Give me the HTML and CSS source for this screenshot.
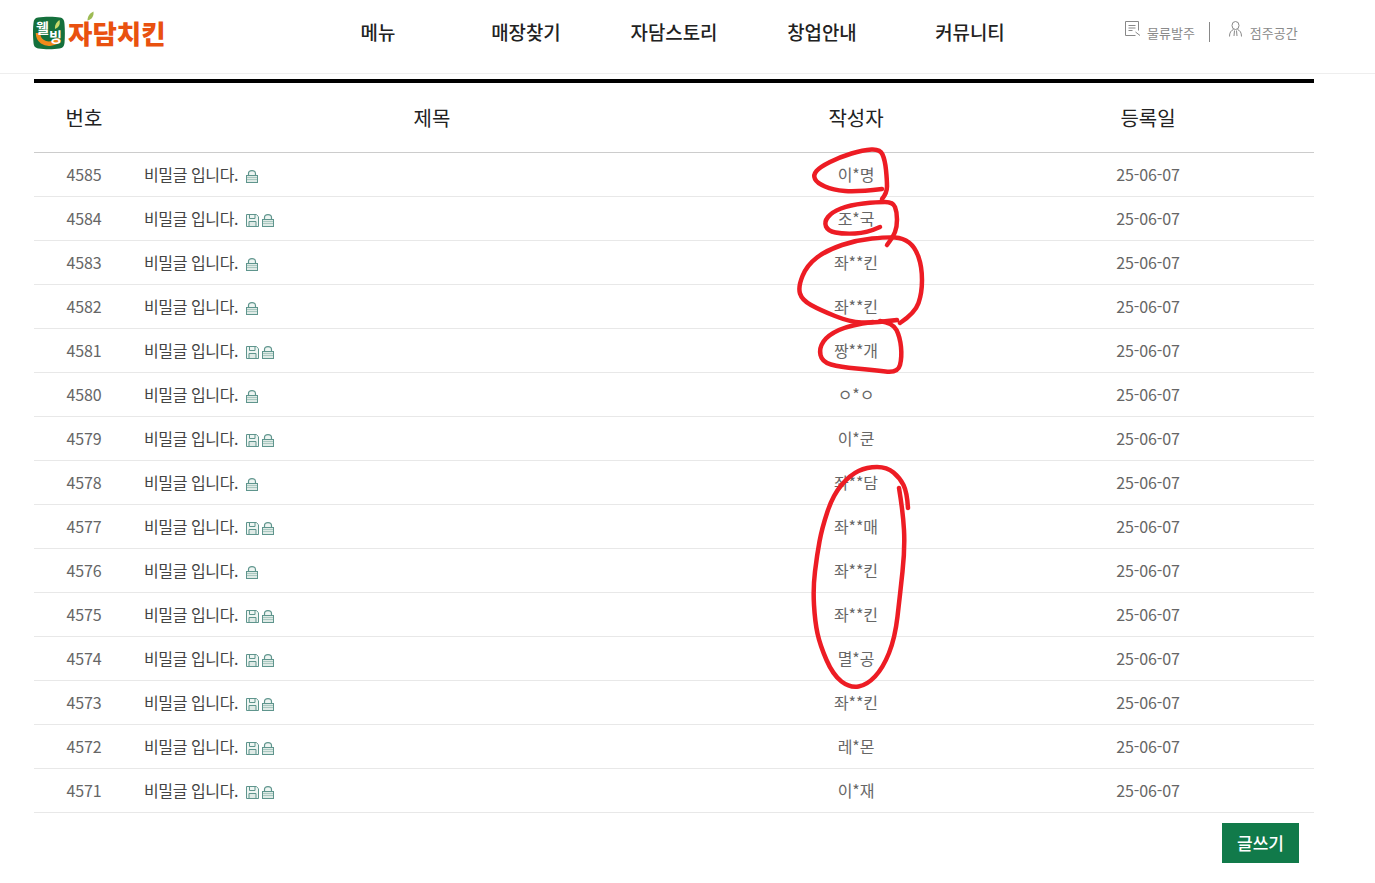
FILE: index.html
```html
<!DOCTYPE html>
<html lang="ko">
<head>
<meta charset="utf-8">
<title>자담치킨</title>
<link rel="stylesheet" href="styles.css">
</head>
<body>
<svg width="0" height="0" class="defs">
  <symbol id="lock" viewBox="0 0 12 13">
    <path d="M2.500 6V3.600C2.500 1.800 4 .6 6 .6s3.500 1.200 3.500 3V6" fill="#eef5f2" stroke="#5f958d" stroke-width="1.200"/>
    <rect x=".5" y="5.500" width="11" height="7" fill="#dfeae6" stroke="#5f958d"/>
    <path d="M1 7.500h10M1 9.500h10" stroke="#a9c8c0"/>
  </symbol>
  <symbol id="disk" viewBox="0 0 13 13">
    <path d="M.5.500h9.800l2.200 2.200v9.800H.5z" fill="#eef5f2" stroke="#5f958d"/>
    <path d="M3.500 1v3.500h5.500V1" fill="none" stroke="#5f958d"/>
    <path d="M3 12V7.500h7V12" fill="#dfeae6" stroke="#5f958d"/>
  </symbol>
</svg>
<header class="site-header">
  <a class="logo">
    <svg class="logo-mark" width="32" height="34" viewBox="0 0 32 34">
      <path d="M5 1.500C11 .5 22 .5 27 1.500 30.500 2 31.500 5 31.500 8c.5 6 .5 13 0 19-.3 3.500-2 5-5 5.500-6 1-15 1-21 0C2 32 .8 30 .5 27-.2 20-.2 13 .5 7 .8 3.500 2 2 5 1.500z" fill="#14703c"/>
      <path d="M5 17C5 25 12 28.500 18 27.500 22 26.800 24.500 25.500 26.500 23" fill="none" stroke="#f08a1c" stroke-width="4.500"/>
      <path d="M22 13c-.5-4 1.500-7 4.500-9 1 4-.5 7.500-4.500 9z" fill="#c6d96a"/>
      <text x="3" y="17" class="mark-text">웰</text>
      <text x="16" y="25.500" class="mark-text">빙</text>
    </svg>
    <span class="logo-word">자담치킨</span>
    <svg class="logo-leaf" width="7" height="10" viewBox="0 0 7 10"><path d="M.5 9.500C.5 5 3 2 6.500.5 7 5 5 8.500.5 9.500z" fill="#9dbb55"/></svg>
  </a>
  <nav class="main-nav">
    <a>메뉴</a>
    <a>매장찾기</a>
    <a>자담스토리</a>
    <a>창업안내</a>
    <a>커뮤니티</a>
  </nav>
  <div class="util">
    <a class="util-link">
      <svg class="util-icon" width="16" height="16" viewBox="0 0 16 16" fill="none" stroke="#888">
        <path d="M13.500 9.500V.5H.5v14h10"/>
        <path d="M3.500 4.500h7M3.500 7h7M3.500 9.500h4M10.500 11l4.500 3.500"/>
      </svg>
      <span>물류발주</span>
    </a>
    <i class="util-sep"></i>
    <a class="util-link">
      <svg class="util-icon" width="16" height="16" viewBox="0 0 16 16" fill="none" stroke="#888">
        <ellipse cx="7.500" cy="4.500" rx="3.500" ry="4"/>
        <path d="M1.500 15.500c0-4 1.500-6 4-7M13.500 15.500c0-4-1.500-6-4-7M6.500 9.500l-.5 5.500M8.500 9.500l.5 5.500"/>
      </svg>
      <span>점주공간</span>
    </a>
  </div>
</header>
<main class="board">
  <table class="board-table">
    <colgroup>
      <col class="c-no"><col class="c-title"><col class="c-author"><col class="c-date">
    </colgroup>
    <thead>
      <tr><th>번호</th><th>제목</th><th>작성자</th><th>등록일</th></tr>
    </thead>
    <tbody>
      <tr><td>4585</td><td class="t">비밀글 입니다.<svg class="ic"><use href="#lock"/></svg></td><td>이*명</td><td>25-06-07</td></tr>
      <tr><td>4584</td><td class="t">비밀글 입니다.<svg class="ic ic-d"><use href="#disk"/></svg><svg class="ic ic-l"><use href="#lock"/></svg></td><td>조*국</td><td>25-06-07</td></tr>
      <tr><td>4583</td><td class="t">비밀글 입니다.<svg class="ic"><use href="#lock"/></svg></td><td>좌**킨</td><td>25-06-07</td></tr>
      <tr><td>4582</td><td class="t">비밀글 입니다.<svg class="ic"><use href="#lock"/></svg></td><td>좌**킨</td><td>25-06-07</td></tr>
      <tr><td>4581</td><td class="t">비밀글 입니다.<svg class="ic ic-d"><use href="#disk"/></svg><svg class="ic ic-l"><use href="#lock"/></svg></td><td>짱**개</td><td>25-06-07</td></tr>
      <tr><td>4580</td><td class="t">비밀글 입니다.<svg class="ic"><use href="#lock"/></svg></td><td>ㅇ*ㅇ</td><td>25-06-07</td></tr>
      <tr><td>4579</td><td class="t">비밀글 입니다.<svg class="ic ic-d"><use href="#disk"/></svg><svg class="ic ic-l"><use href="#lock"/></svg></td><td>이*쿤</td><td>25-06-07</td></tr>
      <tr><td>4578</td><td class="t">비밀글 입니다.<svg class="ic"><use href="#lock"/></svg></td><td>좌**담</td><td>25-06-07</td></tr>
      <tr><td>4577</td><td class="t">비밀글 입니다.<svg class="ic ic-d"><use href="#disk"/></svg><svg class="ic ic-l"><use href="#lock"/></svg></td><td>좌**매</td><td>25-06-07</td></tr>
      <tr><td>4576</td><td class="t">비밀글 입니다.<svg class="ic"><use href="#lock"/></svg></td><td>좌**킨</td><td>25-06-07</td></tr>
      <tr><td>4575</td><td class="t">비밀글 입니다.<svg class="ic ic-d"><use href="#disk"/></svg><svg class="ic ic-l"><use href="#lock"/></svg></td><td>좌**킨</td><td>25-06-07</td></tr>
      <tr><td>4574</td><td class="t">비밀글 입니다.<svg class="ic ic-d"><use href="#disk"/></svg><svg class="ic ic-l"><use href="#lock"/></svg></td><td>멸*공</td><td>25-06-07</td></tr>
      <tr><td>4573</td><td class="t">비밀글 입니다.<svg class="ic ic-d"><use href="#disk"/></svg><svg class="ic ic-l"><use href="#lock"/></svg></td><td>좌**킨</td><td>25-06-07</td></tr>
      <tr><td>4572</td><td class="t">비밀글 입니다.<svg class="ic ic-d"><use href="#disk"/></svg><svg class="ic ic-l"><use href="#lock"/></svg></td><td>레*몬</td><td>25-06-07</td></tr>
      <tr><td>4571</td><td class="t">비밀글 입니다.<svg class="ic ic-d"><use href="#disk"/></svg><svg class="ic ic-l"><use href="#lock"/></svg></td><td>이*재</td><td>25-06-07</td></tr>
    </tbody>
  </table>
  <div class="board-actions"><a class="btn-write">글쓰기</a></div>
</main>
<svg class="ink" width="1375" height="883" viewBox="0 0 1375 883" fill="none" stroke="#ed1c24" stroke-width="4.500" stroke-linecap="round" stroke-linejoin="round">
  <path d="M882 189Q857 192 845 191Q833 190 825 186.500Q817 183 815 179Q813 175 816.500 171Q820 167 830 162Q840 157 851.500 153.500Q863 150 871.500 149.500Q880 149 882.500 154.500Q885 160 886 170Q887 180 887 186.500Q887 193 882 199"/>
  <path d="M880 227Q867 233 855 233.500Q843 234 835.500 232.500Q828 231 826 226.500Q824 222 828 217Q832 212 841 208.500Q850 205 863.500 203.500Q877 202 885 202Q893 202 895 207Q897 212 897 219.500Q897 227 895 232Q893 237 887 245"/>
  <path d="M900 323Q915 313 918.500 303Q922 293 922 280Q922 267 918.500 257Q915 247 909 242.500Q903 238 895 237.500Q887 237 872 238.500Q857 240 842 245Q827 250 817 257.500Q807 265 802.500 276Q798 287 800 293.500Q802 300 811 305Q820 310 835 316Q850 322 861.500 322.500Q873 323 897 320"/>
  <path d="M873 322Q850 325 839 330Q828 335 823.500 341.500Q819 348 820.500 355Q822 362 831 364.500Q840 367 856.500 368.500Q873 370 885.500 371.500Q898 373 900 365Q902 357 901 347Q900 337 896.500 330Q893 323 880 321"/>
  <path d="M899 488Q903 512 904 530Q905 548 902.500 571.500Q900 595 897.500 616.500Q895 638 889 653Q883 668 875 676.500Q867 685 858.500 686.500Q850 688 841.500 681.500Q833 675 826.500 660Q820 645 817.500 633.500Q815 622 814 605Q813 588 815 571.500Q817 555 819.500 541.500Q822 528 827.500 511.500Q833 495 841.500 485Q850 475 858.500 471Q867 467 877 467Q887 467 893.500 472.500Q900 478 903.500 485Q907 492 908 508"/>
</svg>
</body>
</html>
```
FILE: styles.css
```css
* { box-sizing: border-box; }
html, body { margin: 0; padding: 0; }
body {
  position: relative;
  height: 883px;
  overflow: hidden;
  background: #fff;
  color: #555;
  font-family: "Noto Sans CJK KR", "Noto Sans", sans-serif;
}
.defs { position: absolute; }
.site-header {
  display: flex;
  align-items: center;
  height: 74px;
  padding-left: 33px;
  border-bottom: 1px solid #eee;
}
.logo {
  position: relative;
  display: flex;
  align-items: center;
  width: 271px;
  height: 34px;
  margin-top: -8px;
}
.logo-mark { flex: none; }
.mark-text {
  font-size: 14px;
  font-weight: 700;
  fill: #fff;
  font-family: "Noto Sans CJK KR", sans-serif;
}
.logo-word {
  margin-left: 3px;
  font-size: 26.500px;
  font-weight: 900;
  line-height: 34px;
  color: #e9510f;
}
.logo-leaf { position: absolute; left: 54px; top: -5px; }
.main-nav { display: flex; margin-top: -10px; }
.main-nav a {
  width: 148px;
  text-align: center;
  font-size: 18.900px;
  font-weight: 500;
  color: #222;
}
.util {
  display: flex;
  align-items: center;
  margin-left: 81px;
  margin-top: -9px;
}
.util-link {
  display: flex;
  align-items: center;
  font-size: 13px;
  color: #8a8a8a;
}
.util-icon { flex: none; margin-right: 6px; margin-top: -7px; }
.util-sep {
  width: 1px;
  height: 20px;
  margin: 0 18px 0 14px;
  background: #888;
}
.board { width: 1280px; margin: 5px 0 0 34px; }
.board-table {
  width: 1280px;
  table-layout: fixed;
  border-collapse: collapse;
  border-top: 4px solid #000;
}
.c-no { width: 100px; }
.c-title { width: 596px; }
.c-author { width: 252px; }
.c-date { width: 332px; }
.board-table th {
  height: 71px;
  padding: 0;
  font-size: 20px;
  font-weight: 400;
  color: #222;
  text-align: center;
  border-bottom: 1px solid #ccc;
}
.board-table td {
  height: 44px;
  padding: 0 0 1px;
  font-size: 16px;
  line-height: 24px;
  color: #666;
  letter-spacing: -0.1px;
  text-align: center;
  border-bottom: 1px solid #e8e8e8;
}
.board-table td.t {
  padding-left: 10px;
  text-align: left;
  color: #444;
  letter-spacing: -0.4px;
}
.ic {
  display: inline-block;
  width: 12px;
  height: 13px;
  margin-left: 8px;
  vertical-align: -2px;
}
.ic-d { width: 13px; }
.ic-l { margin-left: 3px; }
.board-actions {
  display: flex;
  justify-content: flex-end;
  padding: 10px 15px 0 0;
}
.btn-write {
  width: 77px;
  height: 40px;
  line-height: 40px;
  text-align: center;
  font-size: 17px;
  font-weight: 500;
  color: #fff;
  background: #117a4a;
}
.ink { position: absolute; left: 0; top: 0; pointer-events: none; }
```
